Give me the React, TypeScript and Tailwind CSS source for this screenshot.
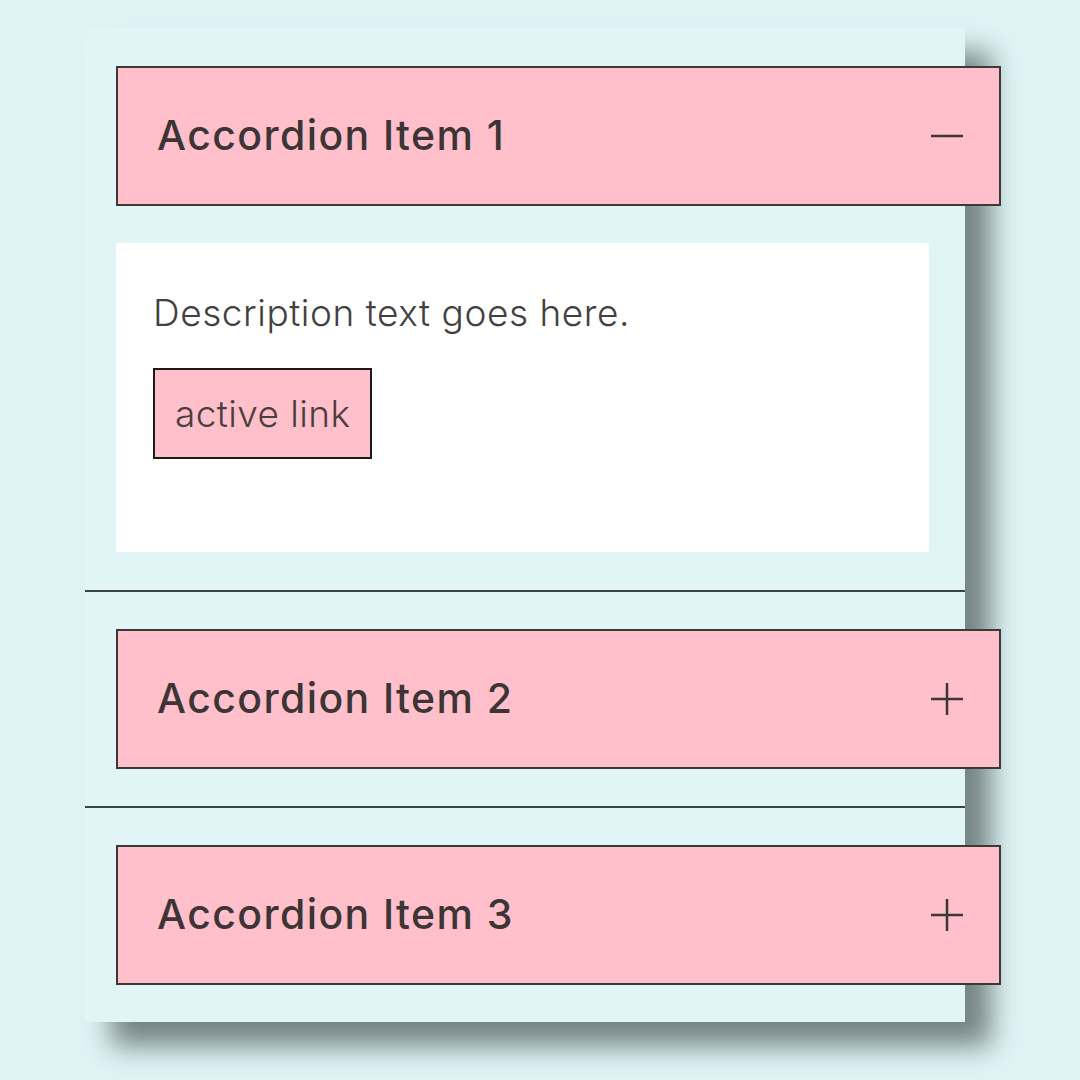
import { useState } from "react"

const items = [
  { title: "Accordion Item 1", body: "Description text goes here." },
  { title: "Accordion Item 2", body: "Description text goes here." },
  { title: "Accordion Item 3", body: "Description text goes here." },
]

function Icon({ open }: { open: boolean }) {
  return (
    <svg width="32" height="32" viewBox="0 0 32 32" className="shrink-0">
      <line x1="0" y1="16" x2="32" y2="16" stroke="#3d3535" strokeWidth="2.5" />
      {!open && <line x1="16" y1="0" x2="16" y2="32" stroke="#3d3535" strokeWidth="2.5" />}
    </svg>
  )
}

export default function App() {
  const [open, setOpen] = useState(0)

  return (
    <div className="h-[1080px] w-full overflow-hidden bg-[#e0f4f6] pt-[28px] pl-[85px] font-['Inter',sans-serif] text-[#3d3535]">
      <div className="w-[880px] bg-[#e1f4f6] shadow-[26px_24px_26px_rgba(50,62,62,0.62)]">
        {items.map((item, i) => (
          <div
            key={item.title}
            className={
              i === 0
                ? "pl-[31px] pt-[38px] pb-[38px]"
                : "pl-[31px] pt-[37px] pb-[37px] border-t-2 border-[#3a4242]"
            }
          >
            <button
              onClick={() => setOpen(open === i ? -1 : i)}
              className="flex h-[140px] w-[885px] items-center justify-between border-2 border-[#3d3939] bg-[#ffc0cb] pl-[39px] pr-[36px] text-left"
            >
              <span className="text-[41px] font-medium tracking-[1.4px]">{item.title}</span>
              <Icon open={open === i} />
            </button>

            {open === i && (
              <div className="mt-[37px] h-[309px] w-[813px] bg-white pl-[37px] pt-[46px]">
                <p className="text-[37px] font-light leading-[48px] tracking-[0.55px] text-[#444040]">{item.body}</p>
                <a
                  href="#"
                  className="mt-[31px] inline-block h-[91px] border-2 border-[#1a1a1a] bg-[#ffc0cb] px-[20px] text-[37px] font-light leading-[87px] tracking-[0.4px] text-[#4a3f3f]"
                >
                  active link
                </a>
              </div>
            )}
          </div>
        ))}
      </div>
    </div>
  )
}
